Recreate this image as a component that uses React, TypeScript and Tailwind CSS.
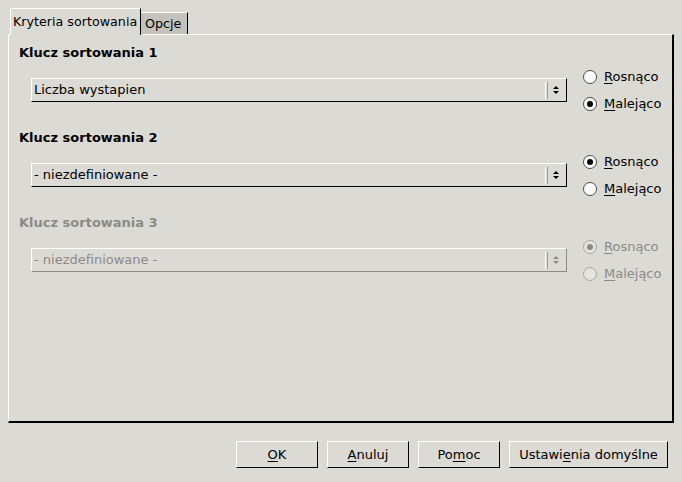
import React from 'react';

const font = { fontFamily: '"DejaVu Sans", Verdana, sans-serif' };

function Radio({ checked, disabled, label, mnemonic }: { checked?: boolean; disabled?: boolean; label: string; mnemonic: number }) {
  return (
    <div className="h-[27px] flex items-center gap-[7px]">
      <div
        className={`w-[14px] h-[14px] rounded-full border flex items-center justify-center ${
          disabled ? 'border-[#a8a6a2] bg-[#e6e4e0]' : 'border-[#4a4946] bg-white'
        }`}
      >
        {checked && <div className={`w-[6px] h-[6px] rounded-full ${disabled ? 'bg-[#8c8a86]' : 'bg-black'}`} />}
      </div>
      <span className={disabled ? 'text-[#8c8a86]' : 'text-black'}>
        {label.slice(0, mnemonic)}
        <span className="underline underline-offset-2">{label[mnemonic]}</span>
        {label.slice(mnemonic + 1)}
      </span>
    </div>
  );
}

function Combo({ value, disabled }: { value: string; disabled?: boolean }) {
  return (
    <div
      className={`w-[536px] h-[24px] flex items-center border-t border-l border-white border-b border-r ${
        disabled ? 'border-b-[#8c8a86] border-r-[#8c8a86]' : 'border-b-black border-r-black'
      }`}
    >
      <span className={`pl-[2px] flex-1 ${disabled ? 'text-[#8c8a86]' : 'text-black'}`}>{value}</span>
      <div className="h-[17px] w-px bg-white mr-px" />
      <div className="h-[17px] w-px bg-[#9d9b97]" />
      <svg width="16" height="12" viewBox="0 0 16 12" className="mr-[2px]">
        <polygon points="5,5 8,2 11,5" fill={disabled ? '#8c8a86' : '#000'} />
        <polygon points="5,7 8,10 11,7" fill={disabled ? '#8c8a86' : '#000'} />
      </svg>
    </div>
  );
}

function SortKey({ n, value, asc, disabled }: { n: number; value: string; asc: boolean; disabled?: boolean }) {
  return (
    <div className="mb-[13px]">
      <div className={`h-[16px] leading-[16px] font-bold ${disabled ? 'text-[#8c8a86]' : 'text-black'}`}>
        Klucz sortowania {n}
      </div>
      <div className="mt-[2px] flex items-center">
        <div className="ml-[12px]">
          <Combo value={value} disabled={disabled} />
        </div>
        <div className="ml-[16px] flex flex-col">
          <Radio label="Rosnąco" mnemonic={0} checked={asc} disabled={disabled} />
          <Radio label="Malejąco" mnemonic={0} checked={!asc} disabled={disabled} />
        </div>
      </div>
    </div>
  );
}

function Button({ label, mnemonic, w }: { label: string; mnemonic: number; w: string }) {
  return (
    <div
      className={`${w} h-[27px] flex items-center justify-center border-t border-l border-white border-b border-r border-b-black border-r-black`}
    >
      <span>
        {label.slice(0, mnemonic)}
        <span className="underline underline-offset-2">{label[mnemonic]}</span>
        {label.slice(mnemonic + 1)}
      </span>
    </div>
  );
}

export default function App() {
  return (
    <div style={font} className="w-[682px] h-[482px] bg-[#dcdad5] text-[13px] text-black overflow-hidden">
      <div className="flex items-end pl-[10px] pt-[8px]">
        <div className="relative z-10 h-[27px] -mb-px w-[131px] bg-[#dcdad5] border-t border-l border-white border-r border-r-black pl-[2px] flex items-center whitespace-nowrap overflow-hidden text-[12.7px]">
          Kryteria sortowania
        </div>
        <div className="h-[22px] w-[47px] bg-[#c4c2bd] border-t border-white border-r border-r-black pl-[4px] flex items-center text-[12.7px]">
          Opcje
        </div>
      </div>
      <div className="mx-[8px] w-[666px] h-[389px] border-t border-l border-white border-b-2 border-r-2 border-b-black border-r-black pt-[10px] pl-[10px]">
        <SortKey n={1} value="Liczba wystapien" asc={false} />
        <SortKey n={2} value="- niezdefiniowane -" asc={true} />
        <SortKey n={3} value="- niezdefiniowane -" asc={true} disabled />
      </div>
      <div className="flex justify-end gap-[9px] pr-[14px] pt-[18px]">
        <Button label="OK" mnemonic={0} w="w-[82px]" />
        <Button label="Anuluj" mnemonic={0} w="w-[82px]" />
        <Button label="Pomoc" mnemonic={2} w="w-[82px]" />
        <Button label="Ustawienia domyślne" mnemonic={6} w="w-[159px]" />
      </div>
    </div>
  );
}
